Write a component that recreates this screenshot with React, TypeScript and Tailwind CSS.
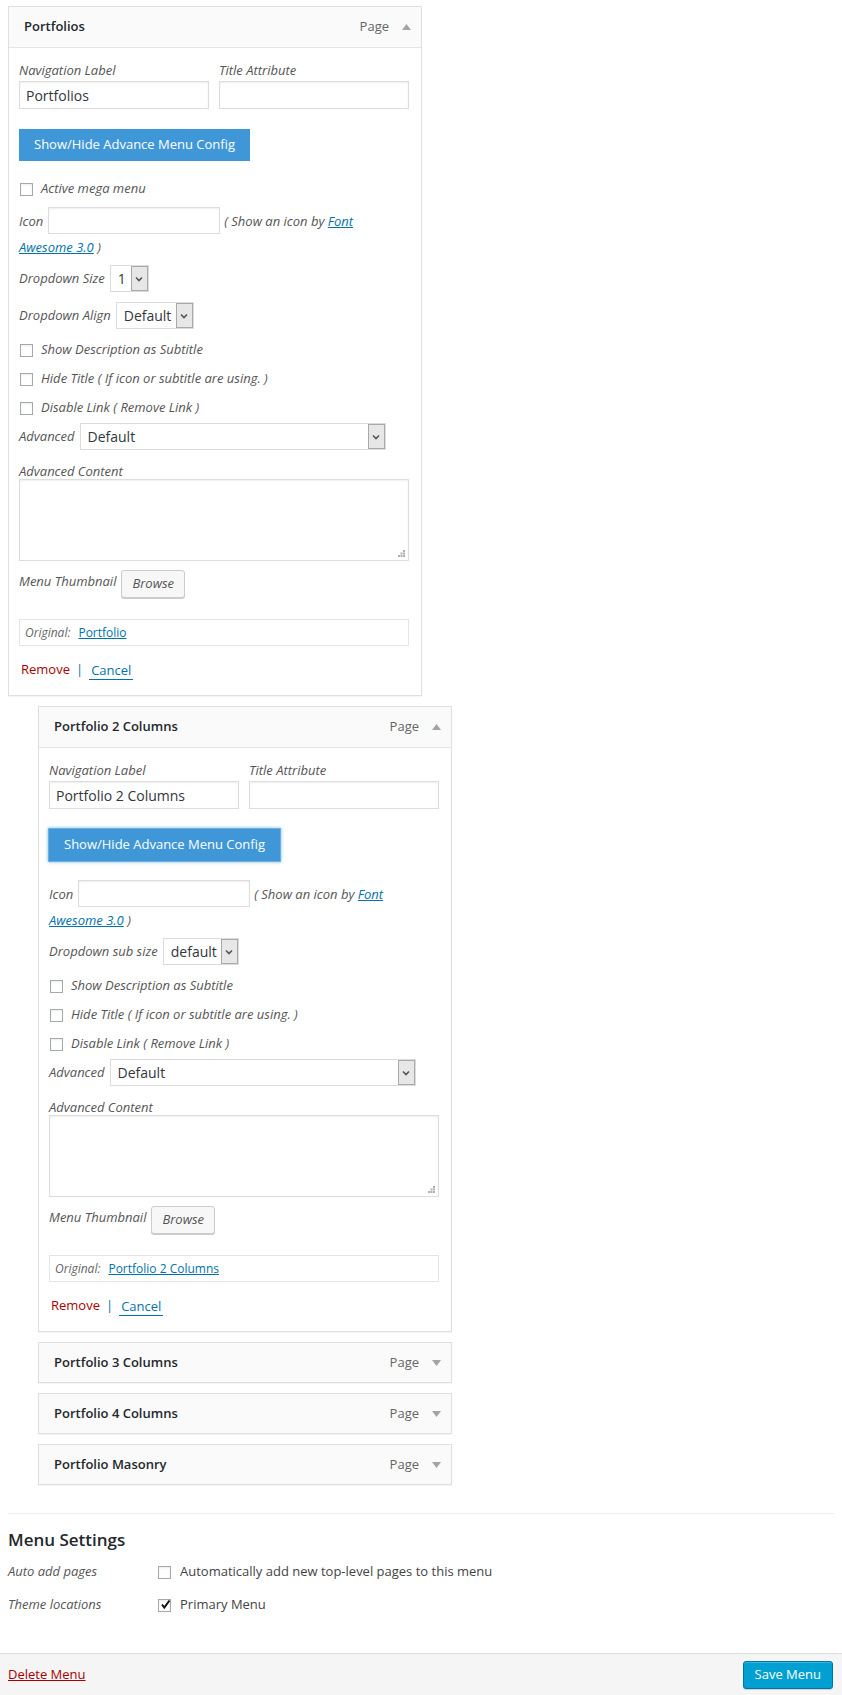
import React from 'react';

interface SelectProps {
  value: string;
  width: string;
}

function FakeSelect({ value, width }: SelectProps) {
  return (
    <div className={`flex h-[27px] ${width} border border-[#dcdcdc] bg-white`}>
      <span className="flex-1 pl-[7px] text-[14px] leading-[25px] text-[#32373c] not-italic">{value}</span>
      <span className="flex h-full w-[17px] items-center justify-center border border-[#a9a9a9] bg-[#e7e7e7]">
        <svg width="8" height="6" viewBox="0 0 8 6">
          <path d="M1 1.5 L4 4.5 L7 1.5" fill="none" stroke="#555" strokeWidth="1.6" />
        </svg>
      </span>
    </div>
  );
}

function Check({ checked = false }: { checked?: boolean }) {
  return (
    <span className="relative inline-flex h-[13px] w-[13px] shrink-0 items-center justify-center border border-[#a4a9ae] bg-white shadow-[inset_0_1px_2px_rgba(0,0,0,0.08)]">
      {checked && (
        <svg width="11" height="11" viewBox="0 0 11 11" className="absolute -top-px left-px">
          <path d="M2 5.5 L4.3 8.5 L9.5 1.5" fill="none" stroke="#111" strokeWidth="2" />
        </svg>
      )}
    </span>
  );
}

function CheckRow({ label }: { label: string }) {
  return (
    <div className="flex h-[28px] items-center gap-[8px] pl-px">
      <Check />
      <span className="italic text-[#555]">{label}</span>
    </div>
  );
}

function Triangle({ up }: { up: boolean }) {
  return (
    <svg width="9" height="6" viewBox="0 0 9 6">
      {up ? <path d="M0 6 L4.5 0 L9 6Z" fill="#a0a5aa" /> : <path d="M0 0 L4.5 6 L9 0Z" fill="#a0a5aa" />}
    </svg>
  );
}

function ItemHeader({ title, up }: { title: string; up: boolean }) {
  return (
    <div className={`flex ${up ? 'h-[40px]' : 'h-[39px]'} items-center justify-between bg-[#fafafa] pl-[15px] pr-[10px]`}>
      <span className="text-[13px] font-semibold text-[#23282d]">{title}</span>
      <span className="flex items-center gap-[13px]">
        <span className="text-[13px] text-[#666]">Page</span>
        <Triangle up={up} />
      </span>
    </div>
  );
}

interface ItemProps {
  title: string;
  top?: boolean;
  original: string;
}

function OpenItem({ title, top = false, original }: ItemProps) {
  return (
    <div className="w-[414px] border border-[#dfdfdf] bg-white shadow-[0_1px_1px_rgba(0,0,0,0.04)]">
      <div className="border-b border-[#e5e5e5]">
        <ItemHeader title={title} up />
      </div>
      <div className="pl-[10px] pr-[11px] pt-[12px] pb-[15px]">
        {/* label + title attribute */}
        <div className="grid grid-cols-[190px_190px] gap-x-[10px]">
          <div>
            <div className="leading-[20px] italic text-[#555]">Navigation Label</div>
            <input
              readOnly
              value={title}
              className="mt-px block h-[28px] w-[190px] border border-[#ddd] bg-white px-[6px] text-[14px] text-[#32373c] shadow-[inset_0_1px_2px_rgba(0,0,0,0.07)] outline-none"
            />
          </div>
          <div>
            <div className="leading-[20px] italic text-[#555]">Title Attribute</div>
            <input
              readOnly
              className="mt-px block h-[28px] w-[190px] border border-[#ddd] bg-white px-[6px] text-[14px] shadow-[inset_0_1px_2px_rgba(0,0,0,0.07)] outline-none"
            />
          </div>
        </div>

        <button
          type="button"
          className={`mt-[20px] block h-[32px] px-[15px] text-[13px] text-white ${
            top ? 'bg-[#3f97d8]' : 'bg-[#3f97d8] shadow-[0_0_0_1px_#6eb0e4,0_0_3px_1px_rgba(30,140,190,0.6)]'
          }`}
        >
          Show/Hide Advance Menu Config
        </button>

        {top && (
          <div className="mt-[18px] flex h-[20px] items-center gap-[8px] pl-px">
            <Check />
            <span className="italic text-[#555]">Active mega menu</span>
          </div>
        )}

        {/* icon */}
        <div className={`${top ? 'mt-[7px]' : 'mt-[18px]'} flex h-[28px] items-center italic text-[#555]`}>
          <span className="pt-[4px]">Icon</span>
          <input
            readOnly
            className="ml-[5px] h-[27px] w-[172px] border border-[#ddd] bg-white shadow-[inset_0_1px_2px_rgba(0,0,0,0.07)] outline-none"
          />
          <span className="ml-[4px] pt-[4px]">
            ( Show an icon by <span className="text-[#0073aa] underline">Font</span>
          </span>
        </div>
        <div className="mt-[3px] leading-[20px] italic text-[#555]">
          <span className="text-[#0073aa] underline">Awesome 3.0</span> )
        </div>

        {top ? (
          <>
            <div className="mt-[8px] flex items-center italic text-[#555]">
              <span className="mr-[5px]">Dropdown Size</span>
              <FakeSelect value="1" width="w-[39px]" />
            </div>
            <div className="mt-[10px] flex items-center italic text-[#555]">
              <span className="mr-[5px]">Dropdown Align</span>
              <FakeSelect value="Default" width="w-[78px]" />
            </div>
          </>
        ) : (
          <div className="mt-[8px] flex items-center italic text-[#555]">
            <span className="mr-[5px]">Dropdown sub size</span>
            <FakeSelect value="default" width="w-[76px]" />
          </div>
        )}

        <div className="mt-[7px] flex flex-col gap-px">
          <CheckRow label="Show Description as Subtitle" />
          <CheckRow label="Hide Title ( If icon or subtitle are using. )" />
          <CheckRow label="Disable Link ( Remove Link )" />
        </div>

        <div className="mt-[1px] flex items-center italic text-[#555]">
          <span className="mr-[5px]">Advanced</span>
          <FakeSelect value="Default" width="w-[306px]" />
        </div>

        <div className="mt-[13px] leading-[16px] italic text-[#555]">Advanced Content</div>
        <div className="relative h-[82px] w-[390px] border border-[#ddd] bg-white shadow-[inset_0_1px_2px_rgba(0,0,0,0.07)]">
          <svg width="7" height="7" viewBox="0 0 7 7" className="absolute bottom-[3px] right-[3px]">
            <rect x="5" y="0" width="2" height="2" fill="#b0b0b0" />
            <rect x="2.5" y="2.5" width="2" height="2" fill="#b0b0b0" />
            <rect x="5" y="2.5" width="2" height="2" fill="#b0b0b0" />
            <rect x="0" y="5" width="2" height="2" fill="#b0b0b0" />
            <rect x="2.5" y="5" width="2" height="2" fill="#b0b0b0" />
            <rect x="5" y="5" width="2" height="2" fill="#b0b0b0" />
          </svg>
        </div>

        <div className="mt-[9px] flex items-start">
          <span className="mt-px leading-[20px] italic text-[#555]">Menu Thumbnail</span>
          <button
            type="button"
            className="ml-[5px] h-[28px] rounded-[3px] border border-[#ccc] bg-[#f7f7f7] px-[10px] text-[13px] italic text-[#555] shadow-[0_1px_0_#ccc]"
          >
            Browse
          </button>
        </div>

        <div className="mt-[21px] flex h-[27px] w-[390px] items-center border border-[#e5e5e5] bg-white pl-[5px]">
          <span className="text-[12px] italic text-[#666]">Original:</span>
          <span className="ml-[8px] text-[12px] text-[#0073aa] underline">{original}</span>
        </div>

        <div className="mt-[14px] flex h-[20px] items-center pl-[2px]">
          <span className="text-[#a00]">Remove</span>
          <span className="mx-[6px] text-[#0073aa]">|</span>
          <span className="border-b border-[#0073aa] px-[2px] leading-[18px] text-[#0073aa]">Cancel</span>
        </div>
      </div>
    </div>
  );
}

function ClosedItem({ title }: { title: string }) {
  return (
    <div className="w-[414px] border border-[#dfdfdf] shadow-[0_1px_1px_rgba(0,0,0,0.04)]">
      <ItemHeader title={title} up={false} />
    </div>
  );
}

export default function App() {
  return (
    <div className="flex min-h-[1695px] flex-col bg-white text-[13px] text-[#444] [font-family:'Open_Sans',sans-serif]">
      <div className="px-[8px] pt-[6px]">
        <OpenItem title="Portfolios" top original="Portfolio" />

        <div className="ml-[30px] mt-[10px] flex flex-col gap-[10px]">
          <OpenItem title="Portfolio 2 Columns" original="Portfolio 2 Columns" />
          <ClosedItem title="Portfolio 3 Columns" />
          <ClosedItem title="Portfolio 4 Columns" />
          <ClosedItem title="Portfolio Masonry" />
        </div>

        <div className="mt-[28px] border-t border-[#eee]" />

        <h3 className="mt-[14px] text-[17px] font-semibold leading-[24px] text-[#23282d]">Menu Settings</h3>

        <div className="mt-[10px] flex h-[20px] items-center">
          <span className="w-[150px] italic text-[#555]">Auto add pages</span>
          <Check />
          <span className="ml-[9px] text-[#444]">Automatically add new top-level pages to this menu</span>
        </div>
        <div className="mt-[13px] flex h-[20px] items-center">
          <span className="w-[150px] italic text-[#555]">Theme locations</span>
          <Check checked />
          <span className="ml-[9px] text-[#444]">Primary Menu</span>
        </div>
      </div>

      {/* footer */}
      <div className="mt-[38px] flex flex-1 items-start justify-between border-t border-[#ddd] bg-[#f5f5f5] pl-[8px] pr-[9px] pt-[7px]">
        <span className="mt-[4px] text-[#a00] underline">Delete Menu</span>
        <button
          type="button"
          className="h-[28px] rounded-[3px] border border-[#0073aa] bg-[#00a0d2] px-[11px] text-[13px] text-white shadow-[inset_0_1px_0_rgba(120,200,230,0.5),0_1px_0_rgba(0,0,0,0.15)]"
        >
          Save Menu
        </button>
      </div>
    </div>
  );
}
